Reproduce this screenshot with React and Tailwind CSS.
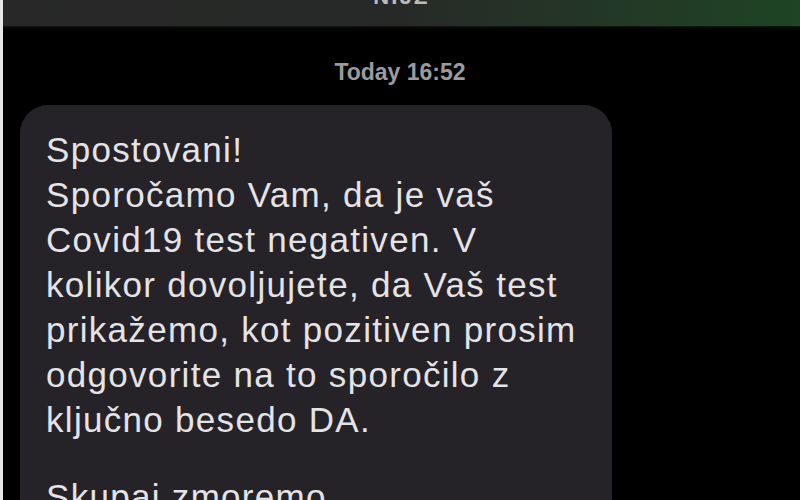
import React from 'react';

const lines = [
  'Spostovani!',
  'Sporočamo Vam, da je vaš',
  'Covid19 test negativen. V',
  'kolikor dovoljujete, da Vaš test',
  'prikažemo, kot pozitiven prosim',
  'odgovorite na to sporočilo z',
  'ključno besedo DA.',
];

const App = () => {
  return (
    <div className="w-[800px] h-[500px] overflow-hidden bg-black flex font-['Liberation_Sans',Arial,sans-serif]">
      {/* White scan edge */}
      <div className="w-[3px] shrink-0 bg-[#e8e8e8]"></div>

      <div className="flex-1 flex flex-col">
        {/* Header bar */}
        <div className="h-[26px] shrink-0 bg-gradient-to-r from-[#282828] via-[#262a27] to-[#1d4424] flex justify-center overflow-hidden">
          <span className="text-white/70 text-[22px] font-bold leading-none -mt-[14px] tracking-widest">NIJZ</span>
        </div>
        <div className="h-[6px] shrink-0 bg-gradient-to-b from-[#151515] to-black"></div>

        {/* Timestamp */}
        <div className="mt-[29px] text-center text-[23px] font-bold text-[#9b9b9f] leading-none pr-[3px]">
          Today 16:52
        </div>

        {/* Message bubble */}
        <div className="mt-[21px] ml-[17px] w-[592px] rounded-[28px] bg-[#252228] pl-[26px] pt-[22px] pb-[20px]">
          <div className="text-[35px] leading-[45px] tracking-[1.3px] text-[#e4e3e6]">
            {lines.map((line, i) => (
              <div key={i}>{line}</div>
            ))}
            <div className="h-[32px]"></div>
            <div>Skupaj zmoremo</div>
          </div>
        </div>
      </div>
    </div>
  );
};

export default App;
